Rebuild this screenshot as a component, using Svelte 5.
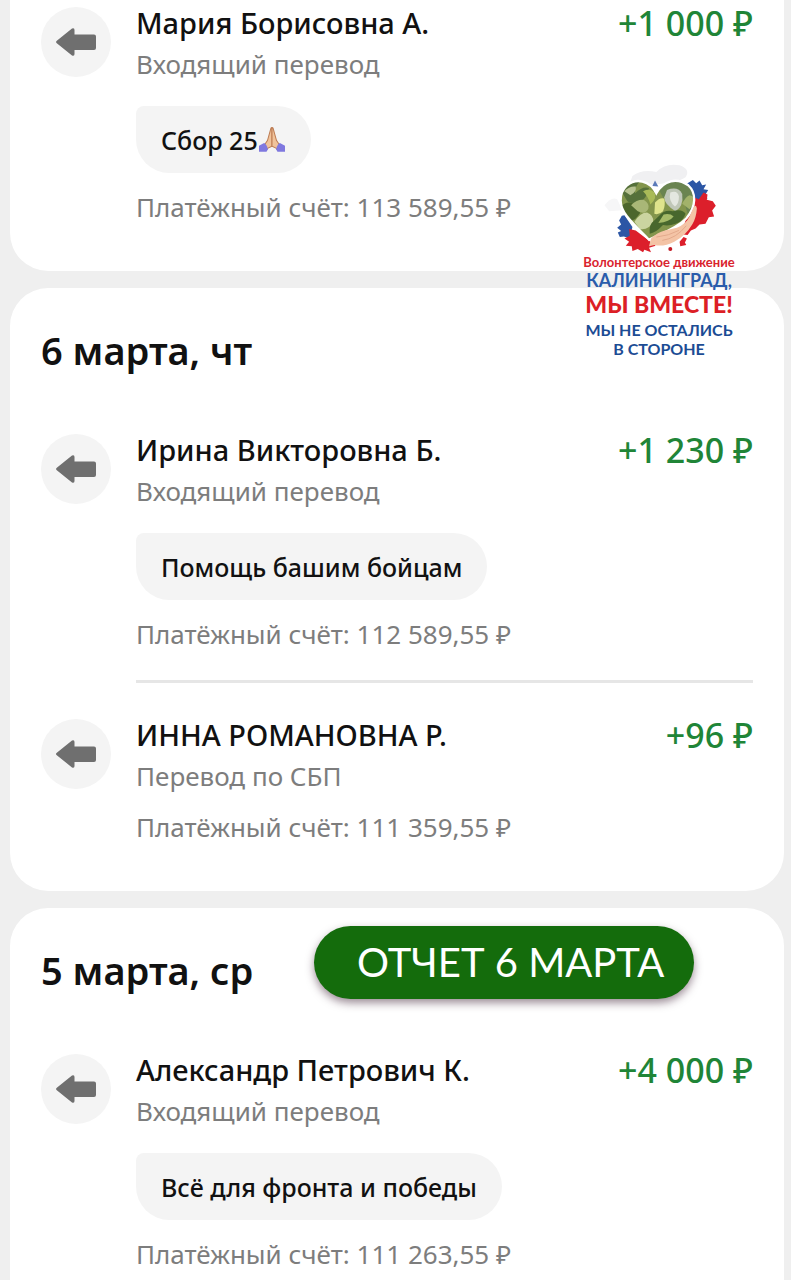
<script lang="ts">
    type Operation = {
        name: string;
        kind: string;
        amount: string;
        message?: string;
        folded?: boolean;
        balance: string;
    };

    type Day = {
        date?: string;
        label?: string;
        operations: Operation[];
    };

    const days: Day[] = [
        {
            operations: [
                {
                    name: 'Мария Борисовна А.',
                    kind: 'Входящий перевод',
                    amount: '+1 000 ₽',
                    message: 'Сбор 25',
                    folded: true,
                    balance: '113 589,55 ₽'
                }
            ]
        },
        {
            date: '6 марта, чт',
            operations: [
                {
                    name: 'Ирина Викторовна Б.',
                    kind: 'Входящий перевод',
                    amount: '+1 230 ₽',
                    message: 'Помощь башим бойцам',
                    balance: '112 589,55 ₽'
                },
                {
                    name: 'ИННА РОМАНОВНА Р.',
                    kind: 'Перевод по СБП',
                    amount: '+96 ₽',
                    balance: '111 359,55 ₽'
                }
            ]
        },
        {
            date: '5 марта, ср',
            label: 'ОТЧЕТ 6 МАРТА',
            operations: [
                {
                    name: 'Александр Петрович К.',
                    kind: 'Входящий перевод',
                    amount: '+4 000 ₽',
                    message: 'Всё для фронта и победы',
                    balance: '111 263,55 ₽'
                }
            ]
        }
    ];
</script>

<main class="feed">
    {#each days as day}
        <section class="card">
            {#if day.date}
                <h2 class="date">{day.date}</h2>
            {/if}
            {#if day.label}
                <div class="label">{day.label}</div>
            {/if}

            {#each day.operations as op}
                <article class="operation">
                    <span class="icon">
                        <svg viewBox="0 0 42 30" width="42" height="30" aria-hidden="true">
                            <path
                                d="M1.5 14 L17 1.6 Q19.500 0.500 19.500 3 V7.500 H39 Q41 7.500 41 9.500 V21 Q41 23 39 23 H19.500 V27 Q19.500 29.500 17 28.400 L1.500 16 Q0.500 15 1.500 14Z"
                                fill="#6f6f6f"
                            />
                        </svg>
                    </span>
                    <div class="details">
                        <div class="top">
                            <h3 class="name">{op.name}</h3>
                            <span class="amount">{op.amount}</span>
                        </div>
                        <p class="kind">{op.kind}</p>
                        {#if op.message}
                            <p class="message">
                                {op.message}{#if op.folded}<svg
                                        class="hands"
                                        viewBox="0 0 80 76"
                                        width="28"
                                        height="26"
                                        role="img"
                                        aria-label="Сложенные ладони"
                                    >
                                        <path d="M37 3 Q40 0 40 5 V56 L24 64 L17 54 L27 39Z" fill="#f0c39b" stroke="#bd7d54" stroke-width="3" />
                                        <path d="M43 3 Q40 0 40 5 V56 L56 64 L63 54 L53 39Z" fill="#f0c39b" stroke="#bd7d54" stroke-width="3" />
                                        <path d="M2 55 L17 47 Q24 50 28 65 L24 72 H2Z" fill="#7f78df" />
                                        <path d="M78 55 L63 47 Q56 50 52 65 L56 72 H78Z" fill="#7f78df" />
                                    </svg>{/if}
                            </p>
                        {/if}
                        <p class="balance">Платёжный счёт: {op.balance}</p>
                    </div>
                </article>
            {/each}
        </section>
    {/each}

    <aside class="emblem">
        <svg viewBox="90 20 360 280" width="120" height="93" aria-hidden="true">
            <path d="M190 62 Q220 40 262 50 Q290 22 332 30 Q366 42 350 66 Q320 90 180 90Z" fill="#f0f0f2" />
            <path d="M106 150 Q126 124 144 132 L160 165 L120 168Z" fill="#f6f6f7" />
            <path d="M352 86 L372 74 L382 84 L392 76 L400 90 L412 88 L404 102 L418 104 L410 118 L416 130 L380 140Z" fill="#2c56a5" />
            <path d="M250 92 L258 76 L268 94Z" fill="#5a79b8" />
            <path d="M158 182 L166 180 L190 216 L182 250 L164 244 L152 246 L146 232 L156 228 L144 218 L156 208 L150 196Z" fill="#2c56a5" />
            <path
                d="M368 142 L378 128 L390 132 L404 112 L416 118 L414 134 L432 138 L441 152 L430 166 L436 184 L420 186 L410 206 L392 208 L380 220 L366 226 L356 240 L344 238 L350 228 L340 226Z"
                fill="#dc1f2b"
            />
            <path d="M344 246 L354 250 L348 262 L352 270 L334 274 L332 260Z" fill="#dc1f2b" />
            <path
                d="M180 222 L200 226 L260 272 L240 278 L246 292 L226 284 L222 292 L206 282 L190 288 L188 274 L170 272 L180 260 L166 250 L182 242Z"
                fill="#dc1f2b"
            />
            <circle cx="304" cy="282" r="6" fill="#c31b24" />
            <clipPath id="heart">
                <path d="M262 114 C242 74 200 68 174 90 C146 116 150 156 174 184 C196 212 222 234 240 254 C262 242 320 222 352 190 C384 152 382 112 358 90 C324 66 284 74 262 114Z" />
            </clipPath>
            <g clip-path="url(#heart)">
                <rect x="140" y="60" width="250" height="200" fill="#83954c" />
                <path d="M150 96 Q180 66 214 76 Q194 100 198 114 Q220 92 240 98 Q232 130 214 140 Q180 150 172 134Z" fill="#55703a" />
                <path d="M166 108 Q180 92 200 94 Q204 110 184 120Z" fill="#b7c291" />
                <path d="M152 158 Q170 136 190 144 Q216 156 212 174 Q200 196 184 196Z" fill="#4c662c" />
                <path d="M186 150 Q204 132 224 134 Q242 146 238 160 Q230 180 206 168Z" fill="#a9b777" />
                <path d="M196 200 Q214 172 234 172 Q256 182 252 200 Q240 226 212 222Z" fill="#cbd4a0" />
                <path d="M222 108 Q244 98 256 112 Q266 130 244 148 Q238 124 222 108Z" fill="#a9ba58" />
                <path d="M258 142 Q272 126 286 130 Q290 152 282 168 Q270 180 256 176Z" fill="#dfe48c" />
                <path d="M270 104 Q296 74 330 76 Q372 86 380 130 Q376 160 356 176 Q350 150 342 134 Q332 108 316 100 Q290 112 284 130Z" fill="#6a8450" />
                <path d="M294 104 Q328 92 340 116 Q344 154 320 168 Q286 148 286 126Z" fill="#c0c7b8" />
                <path d="M304 112 Q326 104 330 124 Q330 146 318 154 Q298 138 304 112Z" fill="#e4e7e0" />
                <path d="M272 180 Q288 162 312 168 Q340 160 350 176 Q342 200 320 206 Q300 214 282 210 Q260 234 242 236 Q240 214 248 204Z" fill="#48672d" />
                <path d="M284 178 Q304 174 314 184 Q302 200 268 204Z" fill="#a5ba68" />
                <path d="M340 146 Q350 124 362 120 Q378 124 378 132 Q372 152 362 162Z" fill="#a2b26a" />
            </g>
            <path
                d="M262 114 C242 74 200 68 174 90 C146 116 150 156 174 184 C196 212 222 234 240 254 C262 242 320 222 352 190 C384 152 382 112 358 90 C324 66 284 74 262 114Z"
                fill="none"
                stroke="#fff"
                stroke-width="7"
            />
            <path
                d="M240 274 L246 250 Q264 232 288 226 L324 218 Q352 206 362 184 L374 156 Q382 146 384 160 Q382 190 370 208 Q350 242 316 260 Q284 276 256 270Z"
                fill="#f4c4a6"
            />
            <path d="M262 246 Q300 242 330 226 M280 256 Q322 250 352 212" fill="none" stroke="#e3aa8c" stroke-width="3" />
        </svg>
        <span class="movement">Волонтерское движение</span>
        <span class="city">КАЛИНИНГРАД,</span>
        <span class="together">МЫ ВМЕСТЕ!</span>
        <span class="motto">МЫ НЕ ОСТАЛИСЬ<br />В СТОРОНЕ</span>
    </aside>
</main>

<style>
    :global(body) {
        margin: 0;
        background: #efefef;
    }

    .feed {
        position: relative;
        display: flex;
        flex-direction: column;
        gap: 17px;
        padding: 0 7px 0 10px;
        font-family: 'Noto Sans', 'Open Sans', sans-serif;
        color: #111;
    }

    h2,
    h3,
    p {
        margin: 0;
    }

    .card {
        position: relative;
        padding: 38px 31px 48px;
        border-radius: 38px;
        background: #fff;
    }

    /* the feed is scrolled: the first and the last card run off the screen */
    .card:first-child {
        padding-top: 7px;
        border-top-left-radius: 0;
        border-top-right-radius: 0;
    }

    .card:nth-child(3) {
        padding-bottom: 10px;
        border-bottom-left-radius: 0;
        border-bottom-right-radius: 0;
    }

    .date {
        margin-bottom: 60px;
        font-size: 38px;
        font-weight: 600;
        line-height: 48px;
    }

    .operation {
        display: flex;
        gap: 25px;
    }

    .icon {
        display: flex;
        align-items: center;
        justify-content: center;
        flex: none;
        width: 70px;
        height: 70px;
        border-radius: 50%;
        background: #f4f4f4;
    }

    .details {
        flex: 1;
        min-width: 0;
    }

    .operation + .operation {
        margin-top: 36px;
    }

    .operation:not(:last-child) .details {
        padding-bottom: 30px;
        border-bottom: 3px solid #e6e6e6;
    }

    .top {
        display: flex;
        justify-content: space-between;
        gap: 16px;
        margin-bottom: 9px;
        line-height: 32px;
    }

    .name {
        font-size: 29px;
        font-weight: 500;
    }

    .amount {
        font-size: 34px;
        font-weight: 500;
        color: #208537;
        white-space: nowrap;
    }

    .kind,
    .balance {
        font-size: 26px;
        line-height: 32px;
        color: #7d7d7d;
    }

    .message {
        display: flex;
        align-items: center;
        width: fit-content;
        height: 67px;
        margin-top: 26px;
        padding: 0 25px;
        box-sizing: border-box;
        border-radius: 8px 34px 34px 34px;
        background: #f4f4f4;
        font-size: 25px;
        font-weight: 500;
    }

    .balance {
        margin-top: 18px;
    }

    .kind + .balance {
        margin-top: 19px;
    }

    .label {
        position: absolute;
        top: 18px;
        left: 304px;
        padding: 0 30px 0 43px;
        border-radius: 37px;
        background: #146c0c;
        box-shadow: 0 4px 8px rgba(60, 30, 50, 0.5);
        color: #fff;
        font-family: Lato, 'Open Sans', sans-serif;
        font-size: 40px;
        line-height: 73px;
        white-space: nowrap;
    }

    .emblem {
        position: absolute;
        top: 162px;
        right: 57px;
        display: flex;
        flex-direction: column;
        align-items: center;
        width: 150px;
        font-family: Lato, 'Open Sans', sans-serif;
        font-weight: 700;
        text-align: center;
        white-space: nowrap;
    }

    .movement {
        font-size: 13px;
        line-height: 14px;
        color: #d9232e;
    }

    .city {
        font-size: 18px;
        line-height: 22px;
        color: #2a5cab;
    }

    .together {
        font-size: 23px;
        font-weight: 900;
        line-height: 26px;
        color: #dc1f26;
    }

    .motto {
        margin-top: 3px;
        font-size: 16px;
        line-height: 19px;
        color: #1c4c94;
    }
</style>
